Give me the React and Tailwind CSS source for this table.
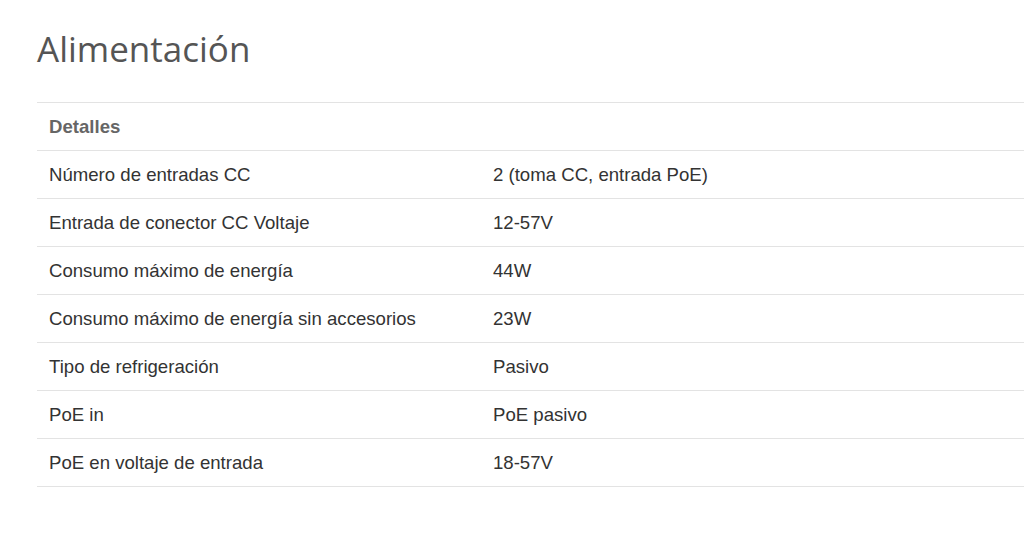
export default function App() {
  const rows = [
    ['Número de entradas CC', '2 (toma CC, entrada PoE)'],
    ['Entrada de conector CC Voltaje', '12-57V'],
    ['Consumo máximo de energía', '44W'],
    ['Consumo máximo de energía sin accesorios', '23W'],
    ['Tipo de refrigeración', 'Pasivo'],
    ['PoE in', 'PoE pasivo'],
    ['PoE en voltaje de entrada', '18-57V'],
  ];

  return (
    <div className="w-[1024px] h-[538px] bg-white overflow-hidden pl-[37px]">
      <h1 className="pt-[29px] mb-[33px] text-[35px] leading-[40px] text-[#555] font-['Open_Sans',sans-serif] font-normal">
        Alimentación
      </h1>
      <div className="w-[1100px] font-['Liberation_Sans',Arial,sans-serif] text-[18.6px] text-[#333]">
        <div className="flex items-center h-[48px] border-t border-[#e3e3e3] px-[12px] font-bold text-[#666]">
          Detalles
        </div>
        {rows.map((r, i) => (
          <div key={i} className="flex items-center h-[48px] border-t border-[#e3e3e3]">
            <div className="w-[444px] pl-[12px]">{r[0]}</div>
            <div className="pl-[12px]">{r[1]}</div>
          </div>
        ))}
        <div className="border-t border-[#e3e3e3]" />
      </div>
    </div>
  );
}
